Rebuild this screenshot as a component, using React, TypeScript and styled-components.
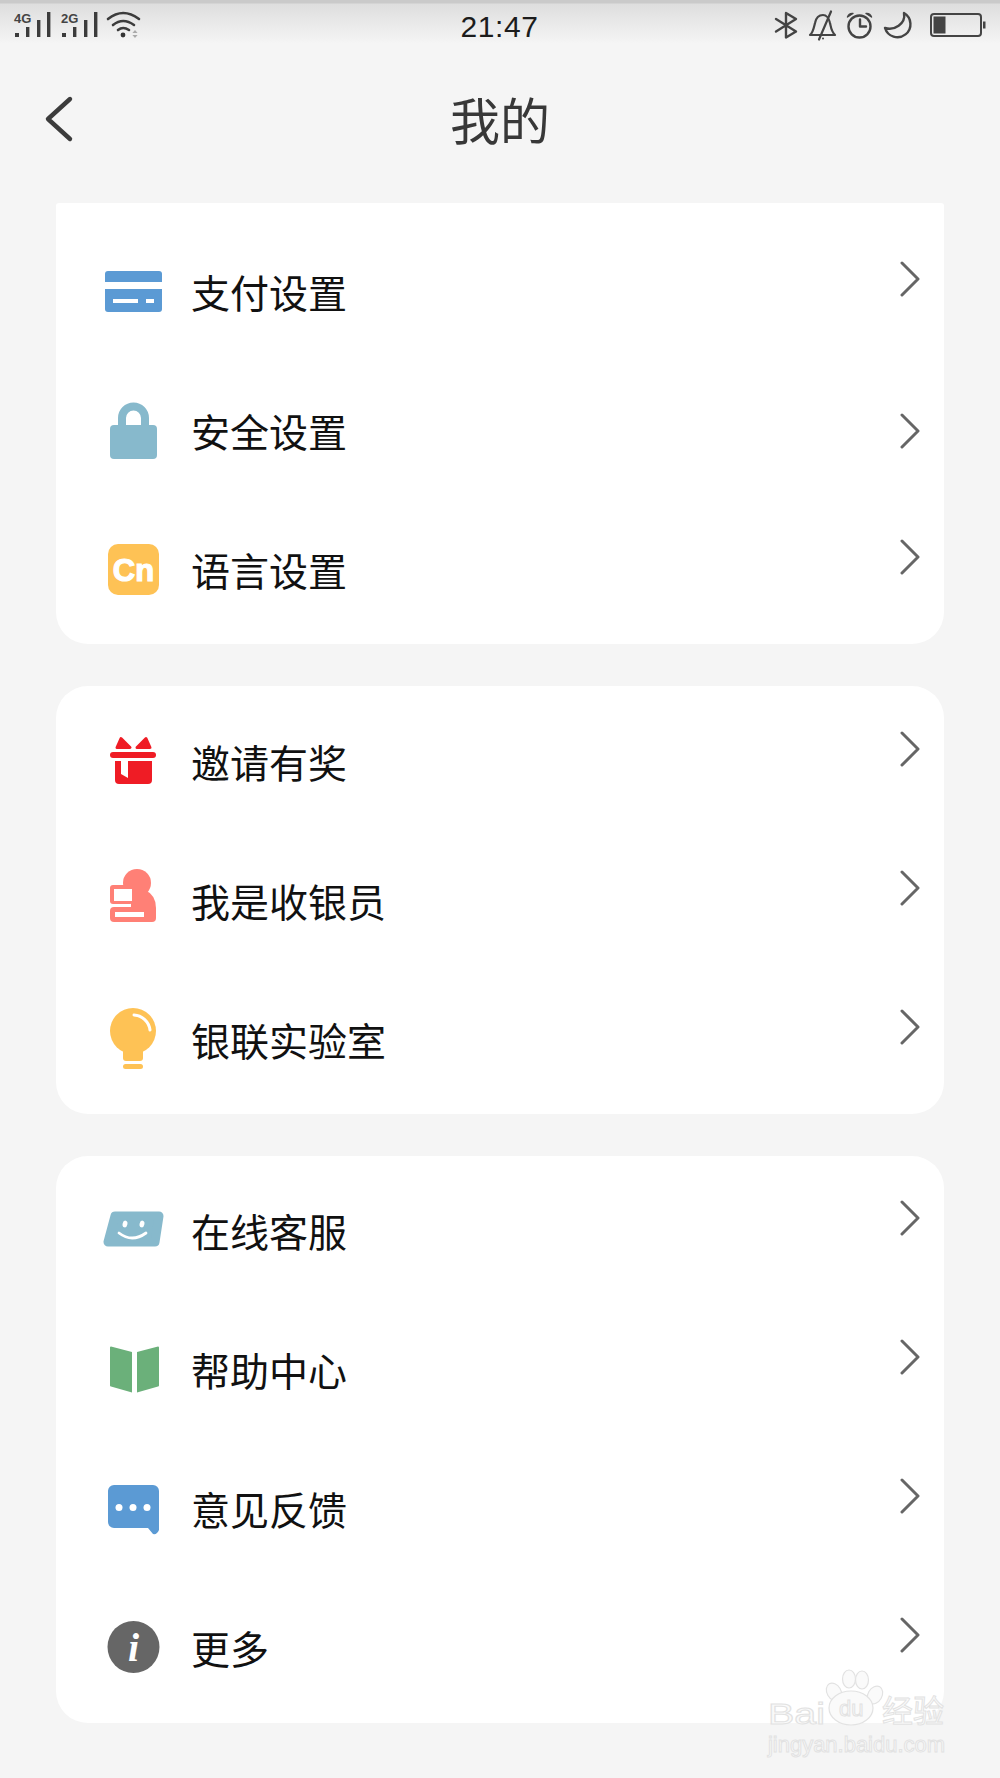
import React from "react";
import styled, { createGlobalStyle } from "styled-components";

const GlobalStyle = createGlobalStyle`
  html, body { margin: 0; padding: 0; background: #f5f5f5; }
  body { font-family: "Noto Sans CJK SC", "Noto Sans", sans-serif; }
`;

const Page = styled.div`
  position: relative;
  width: 1000px;
  height: 1778px;
  overflow: hidden;
  background: #f5f5f5;
`;

const StatusBar = styled.div`
  display: grid;
  grid-template-columns: 1fr auto 1fr;
  align-items: center;
  height: 54px;
  padding: 0 15px 0 14px;
  background: linear-gradient(to bottom, #cacaca 0, #cacaca 3px, #dedede 4px, #f5f5f5 44px);
`;

const StatusLeft = styled.div`
  display: flex;
  align-items: center;
  gap: 10px;
`;

const StatusRight = styled.div`
  display: flex;
  align-items: center;
  justify-content: flex-end;
  gap: 11px;
`;

const Clock = styled.div`
  font-family: "Liberation Sans", Arial, sans-serif;
  font-size: 30px;
  line-height: 54px;
  letter-spacing: 0.6px;
  color: #1c1c1c;
`;

const StatusSvg = styled.svg`
  display: block;
  flex: none;
  overflow: visible;
  fill: none;
  stroke: #444;
  stroke-width: 2.4;
  stroke-linecap: round;
  stroke-linejoin: round;
`;

const BatterySvg = styled(StatusSvg)`
  margin-left: 8px;
`;

const NavBar = styled.div`
  position: relative;
  display: flex;
  align-items: center;
  justify-content: center;
  height: 132px;
`;

const BackButton = styled.svg`
  position: absolute;
  left: 44px;
  top: 40px;
  fill: none;
  stroke: #3c3c3c;
  stroke-width: 4.4;
  stroke-linecap: round;
  stroke-linejoin: round;
`;

const Title = styled.h1`
  margin: 0 0 4px;
  font-size: 50px;
  font-weight: 400;
  line-height: 64px;
  color: #383838;
`;

const CardList = styled.div`
  display: flex;
  flex-direction: column;
  gap: 42px;
  padding: 17px 56px 0;
`;

const Card = styled.section<{ $squareTop?: boolean; $top: number; $bottom: number }>`
  background: #fff;
  border-radius: ${(p) => (p.$squareTop ? "3px 3px 32px 32px" : "32px")};
  padding: ${(p) => p.$top}px 24px ${(p) => p.$bottom}px 45px;
`;

const Row = styled.div`
  display: flex;
  align-items: center;
  height: 139px;
`;

const IconSvg = styled.svg`
  display: block;
  flex: none;
  width: 64px;
  height: 64px;
  margin-bottom: 2px;
  overflow: visible;
`;

const Label = styled.span`
  flex: 1;
  margin: 0 0 5px 26px;
  font-size: 39px;
  line-height: 50px;
  color: #111;
`;

const Chevron = styled.svg<{ $lift: number }>`
  flex: none;
  margin-bottom: ${(p) => p.$lift * 2}px;
  fill: none;
  stroke: #666;
  stroke-width: 3;
  stroke-linecap: round;
  stroke-linejoin: round;
`;

const Watermark = styled.svg`
  position: absolute;
  left: 766px;
  top: 1670px;
  overflow: visible;
  pointer-events: none;
`;

const WMText = styled.text`
  fill: #fafafa;
  stroke: #e2e2e2;
  stroke-width: 1;
  font-family: "Liberation Sans", Arial, sans-serif;
`;

const WMCjk = styled(WMText)`
  font-family: "Noto Sans CJK SC", sans-serif;
`;

const Signal = ({ label }: { label: string }) => (
  <StatusSvg width={37} height={30} viewBox="0 0 37 30">
    <text x={0} y={11} fontFamily="Liberation Sans, Arial, sans-serif" fontSize={13} fontWeight={700} fill="#444" stroke="none">
      {label}
    </text>
    <g fill="#3c3c3c" stroke="none">
      <rect x={1} y={21} width={4} height={4} />
      <rect x={12} y={15} width={3.4} height={10} />
      <rect x={23} y={8} width={3.4} height={17} />
      <rect x={33} y={0} width={3.4} height={25} />
    </g>
  </StatusSvg>
);

const Wifi = () => (
  <StatusSvg width={36} height={30} viewBox="0 0 36 30" style={{ marginLeft: -2 }}>
    <path d="M2 7Q17-5 33 7M7 13Q17 5 28 13M12 18Q17 14 23 18" strokeWidth={2.6} stroke="#3c3c3c" />
    <circle cx={17} cy={23} r={2.4} fill="#333" stroke="none" />
    <path d="M29 18l2.6 3h-5.2zM29 26l-2.6-3h5.2z" fill="#aaa" stroke="none" />
  </StatusSvg>
);

const CardIcon = () => (
  <IconSvg viewBox="0 0 64 64">
    <path d="M7 10H58a3 3 0 0 1 3 3V21H4V13a3 3 0 0 1 3-3Z" fill="#5b9ad4" />
    <path d="M4 28H61V48a3 3 0 0 1-3 3H7a3 3 0 0 1-3-3Z" fill="#5b9ad4" />
    <rect x={12} y={38} width={25} height={4} fill="#fff" />
    <rect x={45} y={38} width={8} height={4} fill="#fff" />
  </IconSvg>
);

const LockIcon = () => (
  <IconSvg viewBox="0 0 64 64">
    <path d="M21 27V18a11.5 11.5 0 0 1 23 0V27" fill="none" stroke="#87b9cc" strokeWidth={8} />
    <rect x={9} y={25} width={47} height={34} rx={4} fill="#87b9cc" />
  </IconSvg>
);

const LangIcon = () => (
  <IconSvg viewBox="0 0 64 64">
    <rect x={7} y={5} width={51} height={51} rx={10} fill="#fec255" />
    <text x={32.5} y={42} textAnchor="middle" fontFamily="Liberation Sans, Arial, sans-serif" fontWeight={700} fontSize={31} fill="#fff" stroke="#fff" strokeWidth={1.2}>
      Cn
    </text>
  </IconSvg>
);

const GiftIcon = () => (
  <IconSvg viewBox="0 0 64 64">
    <g fill="#ef1c25">
      <path d="M16 16.5L20 7.5L29 16.5Z" stroke="#ef1c25" strokeWidth={3} strokeLinejoin="round" />
      <path d="M36 16.5L45 7.5L49 16.5Z" stroke="#ef1c25" strokeWidth={3} strokeLinejoin="round" />
      <rect x={9} y={21} width={46} height={6} rx={3} />
      <path d="M14 30H51V49a4 4 0 0 1-4 4H18a4 4 0 0 1-4-4Z" />
    </g>
    <path d="M20 30H27V47L20 43Z" fill="#fff" />
  </IconSvg>
);

const CashierIcon = () => (
  <IconSvg viewBox="0 0 64 64">
    <g fill="#ff8076">
      <circle cx={36} cy={13} r={14} />
      <path d="M30 20H44Q55 25 55 38V48H30Z" />
      <rect x={9} y={15} width={23} height={19} rx={3} />
      <rect x={9} y={37} width={46} height={15} rx={4} />
    </g>
    <rect x={13} y={19} width={18} height={12} fill="#fff" />
    <rect x={14} y={42} width={29} height={5} fill="#fff" />
    <rect x={9} y={34} width={19} height={3} fill="#fff" />
  </IconSvg>
);

const BulbIcon = () => (
  <IconSvg viewBox="0 0 64 64">
    <circle cx={32} cy={22} r={23} fill="#fec255" />
    <rect x={22} y={34} width={20} height={18} rx={3} fill="#fec255" />
    <rect x={22} y={55} width={20} height={5} rx={2.5} fill="#fec255" />
    <path d="M33 6A17 17 0 0 1 49 21" fill="none" stroke="#fff" strokeWidth={3} strokeLinecap="round" />
  </IconSvg>
);

const FaceIcon = () => (
  <IconSvg viewBox="0 0 64 64">
    <path d="M14 16H58L54 42H7Z" fill="#87b9cc" stroke="#87b9cc" strokeWidth={9} strokeLinejoin="round" />
    <ellipse cx={24} cy={24} rx={2.4} ry={3.4} fill="#fff" transform="rotate(12 24 24)" />
    <ellipse cx={41} cy={24} rx={2.4} ry={3.4} fill="#fff" transform="rotate(12 41 24)" />
    <path d="M18 33Q31 43 45 33" fill="none" stroke="#fff" strokeWidth={2.8} strokeLinecap="round" />
  </IconSvg>
);

const BookIcon = () => (
  <IconSvg viewBox="0 0 64 64">
    <path d="M10 7.5L31 13V53.5L10 47.5A1 1 0 0 1 9 46.5V8.5A1 1 0 0 1 10 7.5Z" fill="#6bb07a" />
    <path d="M57 7.5L36 13V53.5L57 47.5A1 1 0 0 0 58 46.5V8.5A1 1 0 0 0 57 7.5Z" fill="#6bb07a" />
  </IconSvg>
);

const MessageIcon = () => (
  <IconSvg viewBox="0 0 64 64">
    <path d="M13 7H52a6 6 0 0 1 6 6V52Q56 57 52 56L47 50H13a6 6 0 0 1-6-6V13a6 6 0 0 1 6-6Z" fill="#5b9ad4" />
    <circle cx={18} cy={29.5} r={3.5} fill="#fff" />
    <circle cx={32} cy={29.5} r={3.5} fill="#fff" />
    <circle cx={46} cy={29.5} r={3.5} fill="#fff" />
  </IconSvg>
);

const InfoIcon = () => (
  <IconSvg viewBox="0 0 64 64">
    <circle cx={32.5} cy={30} r={26} fill="#666" />
    <text x={32.5} y={44} textAnchor="middle" fontFamily="Liberation Serif, serif" fontStyle="italic" fontWeight={700} fontSize={40} fill="#fff">
      i
    </text>
  </IconSvg>
);

type Item = { label: string; icon: React.ReactNode; lift?: number };

const groups: { top: number; bottom: number; squareTop?: boolean; items: Item[] }[] = [
  {
    top: 21,
    bottom: 3,
    squareTop: true,
    items: [
      { label: "支付设置", icon: <CardIcon /> },
      { label: "安全设置", icon: <LockIcon />, lift: 2 },
      { label: "语言设置", icon: <LangIcon /> },
    ],
  },
  {
    top: 8,
    bottom: 3,
    items: [
      { label: "邀请有奖", icon: <GiftIcon /> },
      { label: "我是收银员", icon: <CashierIcon /> },
      { label: "银联实验室", icon: <BulbIcon /> },
    ],
  },
  {
    top: 7,
    bottom: 4,
    items: [
      { label: "在线客服", icon: <FaceIcon /> },
      { label: "帮助中心", icon: <BookIcon /> },
      { label: "意见反馈", icon: <MessageIcon /> },
      { label: "更多", icon: <InfoIcon /> },
    ],
  },
];

export default function App() {
  return (
    <Page lang="zh-CN">
      <GlobalStyle />
      <StatusBar>
        <StatusLeft>
          <Signal label="4G" />
          <Signal label="2G" />
          <Wifi />
        </StatusLeft>
        <Clock>21:47</Clock>
        <StatusRight>
          <StatusSvg width={24} height={30} viewBox="0 0 24 30">
            <path d="M1 7L21 19.5L11 25.5V1L21 7L1 19.5" />
          </StatusSvg>
          <StatusSvg width={25} height={30} viewBox="0 0 25 30">
            <path d="M0 23C3 21 4 15 5 11C6 6 9 3 13 3C16 3 19 6 20 11C21 15 21 19 25 23Z" strokeWidth={2.2} />
            <path d="M9 27.5L21-.5" strokeWidth={2.2} />
            <circle cx={13} cy={26.5} r={1} fill="#444" stroke="none" />
          </StatusSvg>
          <StatusSvg width={27} height={30} viewBox="0 0 27 30">
            <circle cx={13.5} cy={14.5} r={11} />
            <path d="M14 7.5V14.5H20" />
            <path d="M1.5 5Q3 1 7 1.5ZM25.5 5Q24 1 20 1.5Z" fill="#444" strokeWidth={1.4} />
          </StatusSvg>
          <StatusSvg width={27} height={30} viewBox="0 0 27 30">
            <path d="M20 1A13 13 0 1 1 1 16C10 19 22 12 20 1Z" />
          </StatusSvg>
          <BatterySvg width={55} height={30} viewBox="0 0 55 30">
            <rect x={1} y={2} width={50} height={22} rx={3} strokeWidth={2} />
            <rect x={3.5} y={4.5} width={12} height={17} fill="#444" stroke="none" />
            <rect x={53} y={9.5} width={2.5} height={7} fill="#444" stroke="none" />
          </BatterySvg>
        </StatusRight>
      </StatusBar>

      <NavBar>
        <BackButton width={32} height={50} viewBox="0 0 32 50">
          <path d="M26 5L4 25L26 45" />
        </BackButton>
        <Title>我的</Title>
      </NavBar>

      <CardList>
        {groups.map((g, i) => (
          <Card key={i} $top={g.top} $bottom={g.bottom} $squareTop={g.squareTop}>
            {g.items.map((it) => (
              <Row key={it.label}>
                {it.icon}
                <Label>{it.label}</Label>
                <Chevron $lift={it.lift ?? 15} width={20} height={36} viewBox="0 0 20 36">
                  <path d="M2 2L18 18L2 34" />
                </Chevron>
              </Row>
            ))}
          </Card>
        ))}
      </CardList>

      <Watermark width={182} height={90} viewBox="0 0 182 90" fill="none">
        <g fill="#fafafa" stroke="#e2e2e2" strokeWidth={1.2}>
          <ellipse cx={68} cy={22} rx={7} ry={9.5} transform="rotate(-30 68 22)" />
          <ellipse cx={83} cy={9} rx={6.5} ry={9} />
          <ellipse cx={96} cy={10} rx={6.5} ry={9} />
          <ellipse cx={109} cy={25} rx={7} ry={9.5} transform="rotate(30 109 25)" />
          <ellipse cx={85} cy={38} rx={22} ry={17} />
        </g>
        <WMText x={2} y={54} fontSize={30} textLength={57} lengthAdjust="spacingAndGlyphs">Bai</WMText>
        <WMText x={73} y={46} fontSize={22}>du</WMText>
        <WMCjk x={116} y={52} fontSize={31}>经验</WMCjk>
        <WMText x={2} y={82} fontSize={22} textLength={177}>jingyan.baidu.com</WMText>
      </Watermark>
    </Page>
  );
}
